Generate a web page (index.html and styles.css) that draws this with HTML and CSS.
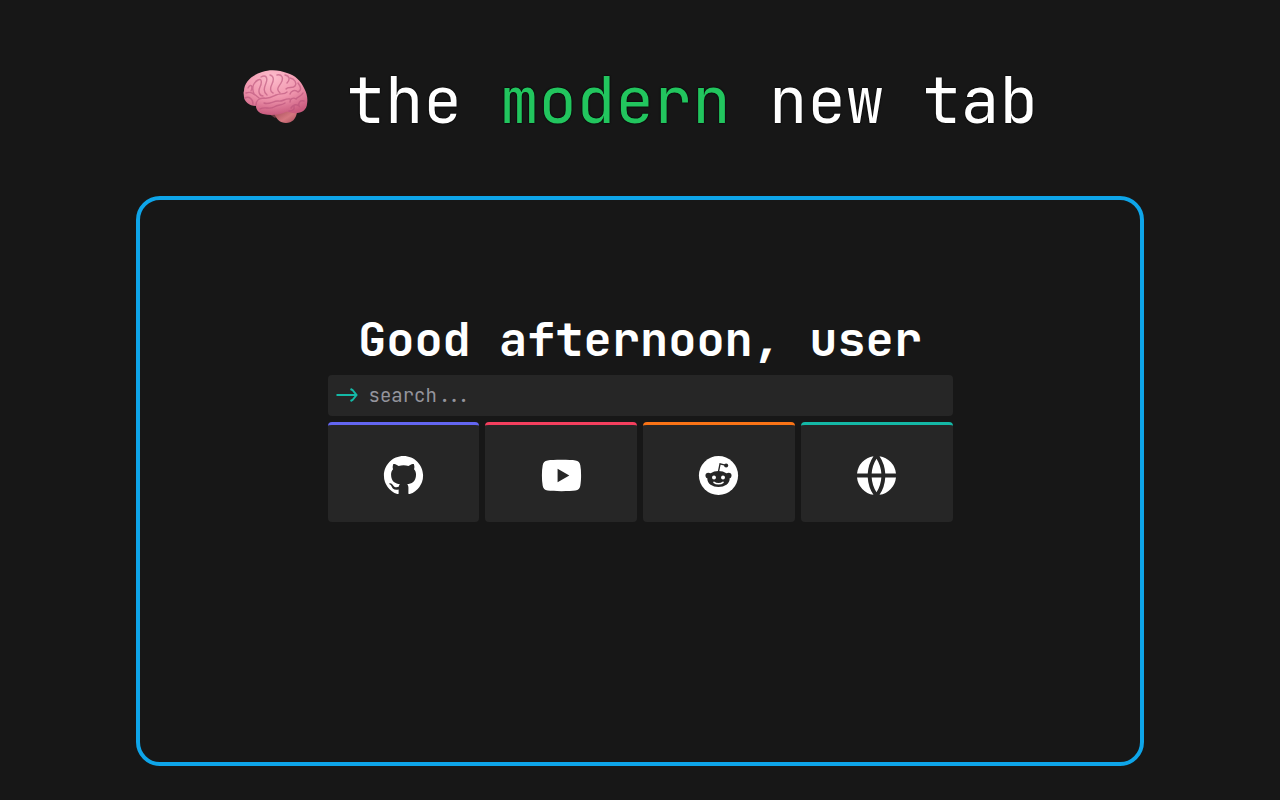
FILE: index.html
```html
<!DOCTYPE html>
<html lang="en">
<head>
<meta charset="utf-8">
<meta name="viewport" content="width=device-width, initial-scale=1">
<title>the modern new tab</title>
<link rel="stylesheet" href="styles.css">
</head>
<body>
<header class="banner">
  <svg class="brain" viewBox="0 0 66 56" role="img" aria-label="brain">
    <defs>
      <radialGradient id="cortex" cx=".45" cy=".15" r=".85">
        <stop offset="0" stop-color="#fdbccb"/>
        <stop offset=".55" stop-color="#f096ae"/>
        <stop offset="1" stop-color="#c95b7e"/>
      </radialGradient>
      <linearGradient id="stem" x1="0" y1="0" x2="1" y2="1">
        <stop offset="0" stop-color="#9c4450"/>
        <stop offset=".6" stop-color="#d57780"/>
        <stop offset="1" stop-color="#a84c5b"/>
      </linearGradient>
    </defs>
    <path fill="#6e3b43" d="M27 45l6 4 4-3z"/>
    <path fill="url(#stem)" d="M32 44c2 6 6 10 12 10 6 0 10-4 11-11l-6-4z"/>
    <path fill="url(#cortex)" d="M2 22C2 13 10 6 20 3c8-3 18-2 25 1 8 2 14 8 17 15 3 5 4 11 3 16 0 5-5 9-10 9-5 1-8-2-11-1-6 3-15 4-23 2-4-1-7-4-7-8-7 0-12-5-12-9 0-2-1-4 0-6z"/>
    <g class="folds">
      <path d="M14 36c0-4 3-7 8-7 5 1 8-1 12-3 5-2 8 0 11-3M18 40c5-3 9 1 14-2s7-1 11-4M22 34c5 2 9-2 14-2 5 1 7-3 12-2M3 29c4-2 8 1 8 6M4 24c5-2 8 1 13 5"/>
      <path d="M6 19c3-5 5-2 3 3M12 25c-3-7 0-12 4-14s4 3 2 7-1 9 3 9M19 8c5-3 7 1 5 6s-3 9 1 12M28 6c4 1 4 5 2 9s-2 8 1 9M35 6c5-1 7 3 4 8s-5 6-1 10M43 6c5 1 5 5 2 8"/>
      <path d="M48 9c5 1 7 5 5 8s-7 0-9 3M56 14c3 4 4 7 0 9-3-3-7-1-8 2M61 24c-2 4-5 3-7 6-3-2-6 0-6 3M62 32c-4-1-6 2-5 5-3-2-6-1-8 2M52 37c1 4-2 5-5 5"/>
    </g>
  </svg>
  <h1 class="title">&nbsp;the <span class="accent">modern</span> new tab</h1>
</header>
<main class="frame">
  <div class="widget">
    <h2 class="greeting">Good afternoon, user</h2>
    <form class="search" role="search">
      <label class="search-label" for="query" aria-label="Search">
        <svg class="arrow" viewBox="0 0 22 16" aria-hidden="true"><path d="M0 8h20M14 2l2 1 4 5-4 5-2 1"/></svg>
      </label>
      <input class="search-input" id="query" type="text" placeholder="search...">
    </form>
    <nav class="links" aria-label="Shortcuts">
      <a class="tile indigo" href="#github" aria-label="GitHub">
        <svg class="icon" viewBox="0 0 24 24"><path d="M12 2C6.475 2 2 6.475 2 12a9.994 9.994 0 0 0 6.838 9.488c.5.087.687-.213.687-.476 0-.237-.013-1.024-.013-1.862-2.512.463-3.162-.612-3.362-1.175-.113-.288-.6-1.175-1.025-1.413-.35-.187-.85-.65-.013-.662.788-.013 1.35.725 1.538 1.025.9 1.512 2.338 1.087 2.912.825.088-.65.35-1.087.638-1.337-2.225-.25-4.55-1.113-4.55-4.938 0-1.088.387-1.987 1.025-2.688-.1-.25-.45-1.275.1-2.65 0 0 .837-.262 2.75 1.026a9.28 9.28 0 0 1 2.5-.338c.85 0 1.7.112 2.5.337 1.912-1.3 2.75-1.024 2.75-1.024.55 1.375.2 2.4.1 2.65.637.7 1.025 1.587 1.025 2.687 0 3.838-2.337 4.688-4.562 4.938.362.312.675.912.675 1.85 0 1.337-.013 2.412-.013 2.75 0 .262.188.574.688.474A10.016 10.016 0 0 0 22 12c0-5.525-4.475-10-10-10z"/></svg>
      </a>
      <a class="tile rose" href="#youtube" aria-label="YouTube">
        <svg class="icon" viewBox="0 0 24 24"><path fill-rule="evenodd" d="M12 4c3.200 0 5.600.1 7.100.3 1.500.2 2.300 1.100 2.500 2.500.3 1.600.4 3.300.4 5.200s-.1 3.600-.4 5.200c-.2 1.400-1 2.300-2.500 2.500-1.500.2-3.900.3-7.100.3s-5.600-.1-7.100-.3c-1.500-.2-2.300-1.100-2.500-2.500C2.100 15.600 2 13.900 2 12s.1-3.600.4-5.200c.2-1.400 1-2.300 2.500-2.500C6.400 4.100 8.800 4 12 4zm-2 4.500v7l6-3.500z"/></svg>
      </a>
      <a class="tile orange" href="#reddit" aria-label="Reddit">
        <svg class="icon" viewBox="0 0 24 24">
          <circle cx="12" cy="12" r="10"/>
          <g class="cut"><ellipse cx="12" cy="13.800" rx="5.700" ry="4.100"/><circle cx="6.800" cy="12" r="1.450"/><circle cx="17.200" cy="12" r="1.450"/><circle cx="15.900" cy="6.900" r="1.050"/></g>
          <path class="antenna" d="M12 10l.8-3.900 3.100.7"/>
          <circle cx="9.700" cy="13" r="1"/><circle cx="14.300" cy="13" r="1"/>
          <path class="smile" d="M9.700 15.500c1.100 1 3.500 1 4.600 0"/>
        </svg>
      </a>
      <a class="tile teal" href="#web" aria-label="Web">
        <svg class="icon" viewBox="0 0 24 24"><path d="M2.050 13h5.477a17.900 17.900 0 0 0 2.925 8.880A10.005 10.005 0 0 1 2.050 13zm0-2a10.005 10.005 0 0 1 8.402-8.880A17.900 17.900 0 0 0 7.527 11H2.050zm19.900 0h-5.477a17.900 17.900 0 0 0-2.925-8.880A10.005 10.005 0 0 1 21.950 11zm0 2a10.005 10.005 0 0 1-8.402 8.880A17.900 17.900 0 0 0 16.473 13h5.478zM9.530 13h4.940A15.908 15.908 0 0 1 12 20.592 15.908 15.908 0 0 1 9.530 13zm0-2A15.908 15.908 0 0 1 12 3.408 15.908 15.908 0 0 1 14.470 11H9.530z"/></svg>
      </a>
    </nav>
  </div>
</main>
</body>
</html>
```

FILE: styles.css
```css
*, *::before, *::after { box-sizing: border-box; }

body {
  margin: 0;
  min-height: 100vh;
  padding: 60px 24px 34px;
  display: flex;
  flex-direction: column;
  align-items: center;
  gap: 56px;
  background: #171717;
  color: #fff;
  font-family: "JetBrains Mono", "DejaVu Sans Mono", monospace;
}

.banner { display: flex; align-items: center; }
.brain { width: 66px; height: 56px; margin-bottom: 6px; }
.folds { fill: none; stroke: #b8527a; stroke-width: 1.4; stroke-linecap: round; opacity: .6; }

.title {
  margin: 0;
  font-size: 64px;
  line-height: 80px;
  font-weight: 400;
  text-shadow: 0 0 2px #000, 0 0 1px #000;
}
.accent { color: #22c55e; }

.frame {
  flex: 1;
  width: 100%;
  max-width: 1008px;
  padding: 24px 24px 156px;
  display: flex;
  align-items: center;
  justify-content: center;
  border: 4px solid #0ea5e9;
  border-radius: 24px;
}

.widget {
  width: 100%;
  max-width: 625px;
  display: flex;
  flex-direction: column;
  gap: 6px;
}

.greeting {
  margin: 0;
  font-size: 47px;
  line-height: 60px;
  font-weight: 700;
  text-align: center;
}

.search {
  display: flex;
  align-items: center;
  gap: 10px;
  height: 41px;
  padding: 0 8px;
  border-radius: 4px;
  background: #262626;
}
.search-label { display: flex; }
.arrow { width: 23px; height: 16px; fill: none; stroke: #14b8a6; stroke-width: 2; }
.search-input {
  flex: 1;
  min-width: 0;
  padding: 0;
  border: 0;
  outline: 0;
  background: transparent;
  color: #fff;
  font-family: inherit;
  font-size: 19px;
}
.search-input::placeholder { color: #a1a1aa; opacity: .9; }

.links { display: grid; grid-template-columns: repeat(4, 1fr); gap: 6px; }
.tile {
  display: flex;
  align-items: center;
  justify-content: center;
  height: 100px;
  padding-top: 5px;
  border-top: 3px solid;
  border-radius: 4px;
  background: #262626;
}
.indigo { border-color: #6366f1; }
.rose { border-color: #f43f5e; }
.orange { border-color: #f97316; }
.teal { border-color: #14b8a6; }

.icon { width: 47px; height: 47px; fill: #fff; }
.cut { fill: #262626; }
.antenna { fill: none; stroke: #262626; stroke-width: .7; }
.smile { fill: none; stroke: #fff; stroke-width: .8; stroke-linecap: round; }
```
